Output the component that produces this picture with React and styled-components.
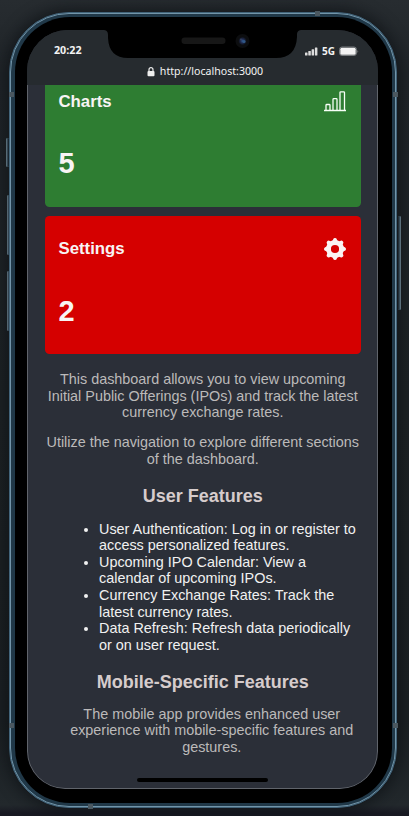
import React from "react";
import styled, { createGlobalStyle } from "styled-components";

const GlobalStyle = createGlobalStyle`
  *, *::before, *::after { box-sizing: border-box; }
  body { margin: 0; background: #202528; overflow: hidden; }
`;

const Stage = styled.main`
  width: 409px;
  height: 816px;
  padding: 12px 0 0 9px;
  position: relative;
  overflow: hidden;
  background: linear-gradient(#272c30 0, #202529 70px, #1d2225 400px, #1b2023 720px, #22282c 805px, #181922 813px);
  font-family: "Liberation Sans", Arial, sans-serif;
`;

const Phone = styled.div`
  position: relative;
  width: 388px;
  height: 796px;
  border-radius: 60px;
  background: #294355;
  border: 1px solid #42647a;
  box-shadow: 0 0 14px 4px rgba(10, 13, 16, 0.55);
`;

const Rim = styled.div`
  height: 100%;
  padding: 3px 3px 3px 4px;
  border-radius: 59px;
  border: 1px solid #7395a9;
  background: #203848;
`;

const Bezel = styled.div`
  height: 100%;
  padding: 13px 0 0 12px;
  border-radius: 55px;
  background: #000;
`;

const Screen = styled.div`
  position: relative;
  width: 351px;
  height: 759px;
  overflow: hidden;
  border-radius: 41px 41px 38px 38px;
  background: #2b2f38;
`;

const Outline = styled.div`
  position: absolute;
  inset: 0;
  border: 1px solid #60646b;
  border-top-color: transparent;
  border-radius: 41px 41px 38px 38px;
  clip-path: inset(55px 0 0 0);
`;

const StatusArea = styled.header`
  height: 55px;
  background: #262b2f;
  color: #f3f3f3;
  display: flex;
  flex-direction: column;
`;

const StatusRow = styled.div`
  height: 33px;
  padding: 10px 19px 0 27px;
  display: flex;
  justify-content: space-between;
  font: 700 10.700px/20px "Open Sans", "Noto Sans", sans-serif;
`;

const Signals = styled.div`
  display: flex;
  align-items: center;
  gap: 4px;
  height: 22px;
  font-size: 10px;
`;

const Address = styled.div`
  display: flex;
  justify-content: center;
  align-items: center;
  gap: 5px;
  height: 17px;
  padding-left: 5px;
  font: 400 10.600px/17px "Noto Sans", sans-serif;
`;

const Notch = styled.svg`
  position: absolute;
  left: 76px;
  top: 0;
`;

const Content = styled.div`
  padding: 0 17.5px 0 18px;
`;

const Card = styled.section`
  height: ${(p) => (p.$cropped ? 122 : 138)}px;
  margin-bottom: 8.5px;
  padding: ${(p) => (p.$cropped ? 6 : 22)}px 14.5px 0 13.5px;
  border-radius: ${(p) => (p.$cropped ? "0 0 4.5px 4.5px" : "4.5px")};
  background: ${(p) => p.$color};
  color: #f8f4f4;
`;

const CardTop = styled.div`
  display: flex;
  justify-content: space-between;
  align-items: center;
  height: 22px;
`;

const CardTitle = styled.h3`
  margin: 0;
  font-size: 16.8px;
  line-height: 20px;
`;

const CardValue = styled.div`
  margin-top: ${(p) => (p.$raised ? 33 : 34)}px;
  font-size: 29px;
  font-weight: 700;
  line-height: 34px;
`;

const Paragraph = styled.p`
  margin: 0 0 13.5px ${(p) => p.$indent || 0}px;
  color: #bcbaba;
  font-size: 14.4px;
  line-height: 16.5px;
  text-align: center;
  white-space: nowrap;
`;

const Intro = styled.div`
  margin-top: 17.6px;
`;

const Heading = styled.h3`
  margin: ${(p) => p.$before}px 0 ${(p) => p.$gap}px;
  color: #d6cccc;
  font-size: 18px;
  line-height: 20px;
  text-align: center;
`;

const FeatureList = styled.ul`
  margin: 0;
  padding: 0 0 0 54px;
  color: #f1f1f1;
  font-size: 14.4px;
  line-height: 16.55px;
  white-space: nowrap;
`;

const HomeIndicator = styled.div`
  position: absolute;
  left: 110px;
  bottom: 7px;
  width: 131px;
  height: 4px;
  border-radius: 2px;
  background: #000;
`;

const SideButton = styled.div`
  position: absolute;
  left: ${(p) => p.$x}px;
  top: ${(p) => p.$y}px;
  width: 3px;
  height: ${(p) => p.$h}px;
  border: 1px solid #49616f;
  border-left-color: ${(p) => (p.$right ? "#30424e" : "#7e98a8")};
  border-right-color: ${(p) => (p.$right ? "#7e98a8" : "#263642")};
  background: #4d6779;
  border-radius: 1px;
`;

const Antenna = styled.div`
  position: absolute;
  left: ${(p) => p.$x}px;
  top: ${(p) => p.$y}px;
  width: 5px;
  height: 5px;
  background: #4b5860;
`;

const NotchShape = () => (
  <Notch width="200" height="29" viewBox="0 0 200 29" aria-hidden="true">
    <defs>
      <radialGradient id="lens">
        <stop offset="0" stopColor="#315b94" />
        <stop offset=".5" stopColor="#202a4f" />
        <stop offset="1" stopColor="#0d1015" />
      </radialGradient>
    </defs>
    <path d="M0 0H199C196 0 194 1 194 5V7Q193 28 173 28H25Q6 28 5 8V5C5 1 3 0 0 0Z" fill="#000" />
    <rect x="78.500" y="7.500" width="44" height="6.500" rx="3.250" fill="#171717" />
    <circle cx="139.500" cy="11" r="7" fill="#0c0d0f" />
    <circle cx="139.500" cy="11" r="4" fill="url(#lens)" />
    <circle cx="138" cy="9.500" r="1" fill="#34405e" />
    <circle cx="141" cy="11.500" r="1.500" fill="#315987" />
  </Notch>
);

const SignalIcon = () => (
  <svg width="13" height="9" viewBox="0 0 13 9" fill="#ddd" aria-hidden="true">
    <rect y="5.500" width="2.500" height="3" rx=".5" />
    <rect x="3.300" y="4" width="2.500" height="4.500" rx=".5" />
    <rect x="6.600" y="2.300" width="2.500" height="6.200" rx=".5" />
    <rect x="9.900" y=".5" width="2.500" height="8" rx=".5" />
  </svg>
);

const BatteryIcon = () => (
  <svg width="20" height="10" viewBox="0 0 20 10" aria-hidden="true">
    <rect x=".5" y="1" width="17" height="8.500" rx="2.500" fill="none" stroke="#777b7e" />
    <rect x="1.300" y="1.800" width="15.400" height="6.900" rx="1.500" fill="#f3f3f3" />
    <path d="M18.500 4q1.500 1.500 0 3z" fill="#888" />
  </svg>
);

const LockIcon = () => (
  <svg width="8" height="10" viewBox="0 0 8 10" aria-hidden="true">
    <path d="M2 5V2.700a2 2 0 0 1 4 0V5" fill="none" stroke="#eee" strokeWidth="1.200" />
    <rect x=".5" y="4" width="7" height="5.200" rx="1" fill="#eee" />
  </svg>
);

const ChartIcon = () => (
  <svg width="22" height="22" viewBox="0 0 22 22" fill="none" stroke="#f8fff8" strokeWidth="1.300" aria-hidden="true">
    <path d="M0 19.500H22M2 19V14.300q0-.8.800-.8H5.200q.8 0 .8.800V19M9 19V8.500q0-.8.800-.8H12.200q.8 0 .8.800V19M16 19V1.600q0-.8.800-.8H19.700q.8 0 .8.800V19" />
  </svg>
);

const toothAngles = [0, 45, 90, 135, 180, 225, 270, 315];

const GearIcon = () => (
  <svg width="22" height="22" viewBox="-11 -11 22 22" fill="#fbf3f3" aria-hidden="true">
    <circle r="6.500" fill="none" stroke="#fbf3f3" strokeWidth="4.800" />
    {toothAngles.map((angle) => (
      <path key={angle} transform={`rotate(${angle})`} d="M-3.300-7.500C-2.200-8.500-2-9.200-1.800-9.800Q-1.400-11 0-11T1.800-9.800C2-9.200 2.200-8.500 3.300-7.500Z" />
    ))}
  </svg>
);

export default function App() {
  return (
    <>
      <GlobalStyle />
      <Stage>
        <SideButton $x={6} $y={138} $h={29} />
        <SideButton $x={7} $y={195} $h={60} />
        <SideButton $x={7} $y={271} $h={60} />
        <SideButton $x={398} $y={216} $h={94} $right />
        <Phone>
          <Rim>
            <Bezel>
              <Screen>
                <StatusArea>
                  <StatusRow>
                    <span>20:22</span>
                    <Signals><SignalIcon /><span>5G</span><BatteryIcon /></Signals>
                  </StatusRow>
                  <Address><LockIcon /><span>http://localhost:3000</span></Address>
                </StatusArea>
                <NotchShape />
                <Content>
                  <Card $cropped $color="#2e7d32">
                    <CardTop><CardTitle>Charts</CardTitle><ChartIcon /></CardTop>
                    <CardValue $raised>5</CardValue>
                  </Card>
                  <Card $color="#d50000">
                    <CardTop><CardTitle>Settings</CardTitle><GearIcon /></CardTop>
                    <CardValue>2</CardValue>
                  </Card>
                  <Intro>
                    <Paragraph>This dashboard allows you to view upcoming<br />Initial Public Offerings (IPOs) and track the latest<br />currency exchange rates.</Paragraph>
                    <Paragraph>Utilize the navigation to explore different sections<br />of the dashboard.</Paragraph>
                  </Intro>
                  <Heading $before={19} $gap={14.7}>User Features</Heading>
                  <FeatureList>
                    <li>User Authentication: Log in or register to<br />access personalized features.</li>
                    <li>Upcoming IPO Calendar: View a<br />calendar of upcoming IPOs.</li>
                    <li>Currency Exchange Rates: Track the<br />latest currency rates.</li>
                    <li>Data Refresh: Refresh data periodically<br />or on user request.</li>
                  </FeatureList>
                  <Heading $before={18.7} $gap={14}>Mobile-Specific Features</Heading>
                  <Paragraph $indent={18}>The mobile app provides enhanced user<br />experience with mobile-specific features and<br />gestures.</Paragraph>
                </Content>
                <HomeIndicator />
                <Outline />
              </Screen>
            </Bezel>
          </Rim>
        </Phone>
        <Antenna $x={315} $y={11} />
        <Antenna $x={9} $y={92} />
        <Antenna $x={393} $y={92} />
        <Antenna $x={9} $y={723} />
        <Antenna $x={393} $y={723} />
        <Antenna $x={88} $y={804} />
      </Stage>
    </>
  );
}
